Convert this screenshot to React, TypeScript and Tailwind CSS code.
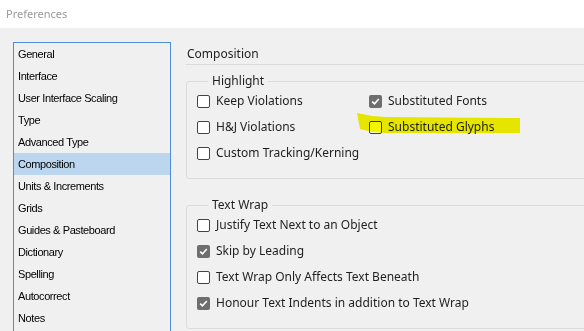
import React from "react";

const items = [
  "General",
  "Interface",
  "User Interface Scaling",
  "Type",
  "Advanced Type",
  "Composition",
  "Units & Increments",
  "Grids",
  "Guides & Pasteboard",
  "Dictionary",
  "Spelling",
  "Autocorrect",
  "Notes",
];

function Box({ checked }: { checked?: boolean }) {
  if (checked) {
    return (
      <span className="w-[13px] h-[13px] rounded-[2px] bg-[#6e6e6e] flex items-center justify-center shrink-0">
        <svg width="9" height="9" viewBox="0 0 9 9">
          <path d="M1.2 4.6 L3.5 6.9 L7.8 2" fill="none" stroke="#fff" strokeWidth="1.6" />
        </svg>
      </span>
    );
  }
  return <span className="w-[13px] h-[13px] rounded-[2px] bg-white border border-[#444] shrink-0" />;
}

function Row({ label, checked }: { label: string; checked?: boolean }) {
  return (
    <div className="flex items-center gap-[6px] h-[26px]">
      <Box checked={checked} />
      <span className="whitespace-nowrap">{label}</span>
    </div>
  );
}

export default function App() {
  return (
    <div
      className="w-[584px] h-[331px] overflow-hidden bg-[#f0f0f0] relative text-[#1e1e1e]"
      style={{ fontFamily: '"Noto Sans", "Liberation Sans", sans-serif' }}
    >
      <div className="h-[28px] bg-white flex items-center pl-[6px] text-[11px] text-[#9a9a9a]">Preferences</div>
      <div className="flex pt-[14px] pl-[13px] gap-[15px]">
        <div
          className="w-[158px] h-[320px] shrink-0 border border-[#4a8fd8] bg-[#f0f0f0] text-[11px] tracking-[-0.4px] text-black"
          style={{ fontFamily: '"Liberation Sans", sans-serif' }}
        >
          {items.map((it) => (
            <div
              key={it}
              className={`h-[22px] flex items-center pl-[4px] ${it === "Composition" ? "bg-[#bcd6f0]" : ""}`}
            >
              {it}
            </div>
          ))}
        </div>
        <div className="w-[460px] shrink-0 text-[12px]">
          <div className="h-[23px] flex items-center pt-[2px] pl-[1px] border-b border-[#dadada]">Composition</div>
          <fieldset className="mt-[9px] border border-[#dcdcdc] rounded-[3px] pl-[10px] pt-0 pb-[12px]">
            <legend className="ml-[11px] px-[4px] leading-[14px]">Highlight</legend>
            <div className="flex">
              <div className="w-[172px] flex flex-col">
                <Row label="Keep Violations" />
                <Row label="H&J Violations" />
                <Row label="Custom Tracking/Kerning" />
              </div>
              <div className="flex flex-col">
                <Row label="Substituted Fonts" checked />
                <Row label="Substituted Glyphs" />
              </div>
            </div>
          </fieldset>
          <fieldset className="mt-[19px] border border-[#dcdcdc] rounded-[3px] pl-[10px] pt-0 pb-[12px]">
            <legend className="ml-[11px] px-[4px] leading-[14px]">Text Wrap</legend>
            <Row label="Justify Text Next to an Object" />
            <Row label="Skip by Leading" checked />
            <Row label="Text Wrap Only Affects Text Beneath" />
            <Row label="Honour Text Indents in addition to Text Wrap" checked />
          </fieldset>
        </div>
      </div>
      <svg className="absolute left-0 top-0 pointer-events-none mix-blend-multiply" width="584" height="331">
        <polygon points="357,113 372,116 386,117 520,118 520,133 386,133 372,132 360,129" fill="#f4f400" />
      </svg>
    </div>
  );
}
